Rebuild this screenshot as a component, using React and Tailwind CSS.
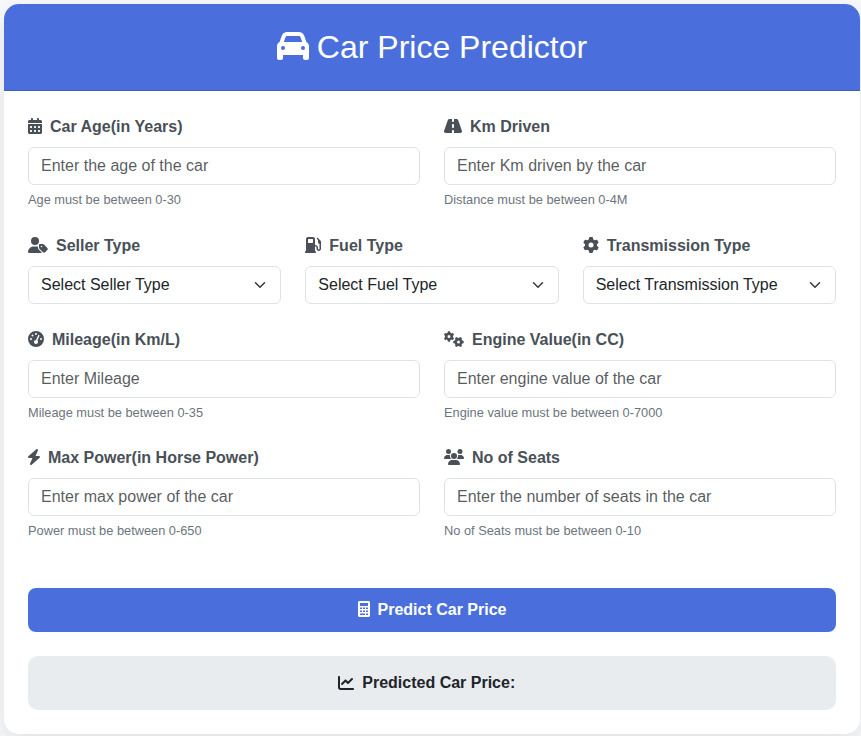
import React from "react";
import {
  FaCar,
  FaCalendarDays,
  FaRoad,
  FaUserTag,
  FaGasPump,
  FaGear,
  FaGaugeHigh,
  FaGears,
  FaUsers,
  FaChartLine,
} from "react-icons/fa6";

function Bolt({ className }) {
  return (
    <svg viewBox="0 0 384 512" fill="currentColor" className={className}>
      <path d="M240.5 224H352C365.3 224 377.3 232.3 381.1 244.7C386.6 257.2 383.1 271.3 373.1 280.1L117.1 504.1C105.8 513.9 89.27 514.7 77.19 505.9C65.1 497.1 60.7 481.1 66.59 467.4L143.5 288H31.1C18.67 288 6.733 279.7 2.044 267.3C-2.645 254.8 .8944 240.7 10.93 231.9L266.9 7.918C278.2-1.92 294.7-2.669 306.8 6.114C318.9 14.9 323.3 30.87 317.4 44.61L240.5 224z" />
    </svg>
  );
}

function Calculator({ className }) {
  return (
    <svg viewBox="0 0 384 512" fill="currentColor" fillRule="evenodd" className={className}>
      <path d="M336 0H48C22.4 0 0 22.4 0 48v416c0 25.600 22.400 48 48 48h288c25.600 0 48-22.400 48-48V48c0-25.600-22.400-48-48-48zM64 64h256v96H64zM64 208h64v48H64zM160 208h64v48h-64zM256 208h64v48h-64zM64 304h64v48H64zM160 304h64v48h-64zM256 304h64v48h-64zM64 400h160v48H64zM256 400h64v48h-64z" />
    </svg>
  );
}

function Label({ icon: Icon, iconClass, children }) {
  return (
    <label className="mb-2 flex h-6 items-center gap-2 font-bold text-[#495057]">
      <Icon className={"mb-0.5 h-4 shrink-0 " + iconClass} />
      <span>{children}</span>
    </label>
  );
}

function Field({ icon, iconClass, label, placeholder, help }) {
  return (
    <div>
      <Label icon={icon} iconClass={iconClass}>{label}</Label>
      <input
        placeholder={placeholder}
        className="block h-[38px] w-full rounded-md border border-[#dee2e6] bg-white px-3 py-1.5 leading-6 placeholder:text-[#212529bf]"
      />
      <div className="mt-1 h-5 text-[12.8px] leading-[22px] text-[#6c757d]">{help}</div>
    </div>
  );
}

function Select({ icon, iconClass, label, value }) {
  return (
    <div>
      <Label icon={icon} iconClass={iconClass}>{label}</Label>
      <div className="flex h-[38px] items-center justify-between rounded-md border border-[#dee2e6] bg-white px-3 leading-6">
        <span>{value}</span>
        <svg viewBox="0 0 16 16" className="h-3 w-4" fill="none" stroke="#343a40" strokeWidth="2" strokeLinecap="round" strokeLinejoin="round">
          <path d="m2 5 6 6 6-6" />
        </svg>
      </div>
    </div>
  );
}

export default function App() {
  return (
    <div className="h-[736px] overflow-hidden bg-[#f8f9fa] pl-1 pr-px pt-1 font-['Liberation_Sans',Arial,sans-serif] text-base text-[#212529]">
      <div className="h-[730px] overflow-hidden rounded-[15px] bg-white shadow-[0_10px_30px_rgba(0,0,0,0.1)]">
        <header className="flex h-[87px] items-center justify-center gap-2 border-b border-[#3f5fbf] bg-[#4a6fdc] text-white">
          <FaCar className="mb-0.5 size-8" />
          <h2 className="text-[32px] leading-[38.4px]">Car Price Predictor</h2>
        </header>
        <form className="flex flex-col gap-6 p-6">
          <div className="mb-px grid grid-cols-2 gap-6">
            <Field icon={FaCalendarDays} iconClass="w-3.5" label="Car Age(in Years)" placeholder="Enter the age of the car" help="Age must be between 0-30" />
            <Field icon={FaRoad} iconClass="w-[18px]" label="Km Driven" placeholder="Enter Km driven by the car" help="Distance must be between 0-4M" />
          </div>
          <div className="grid grid-cols-3 gap-6">
            <Select icon={FaUserTag} iconClass="w-5" label="Seller Type" value="Select Seller Type" />
            <Select icon={FaGasPump} iconClass="w-4" label="Fuel Type" value="Select Fuel Type" />
            <Select icon={FaGear} iconClass="w-4" label="Transmission Type" value="Select Transmission Type" />
          </div>
          <div className="grid grid-cols-2 gap-6">
            <Field icon={FaGaugeHigh} iconClass="w-4" label="Mileage(in Km/L)" placeholder="Enter Mileage" help="Mileage must be between 0-35" />
            <Field icon={FaGears} iconClass="w-5" label="Engine Value(in CC)" placeholder="Enter engine value of the car" help="Engine value must be between 0-7000" />
          </div>
          <div className="grid grid-cols-2 gap-6">
            <Field icon={Bolt} iconClass="w-3" label="Max Power(in Horse Power)" placeholder="Enter max power of the car" help="Power must be between 0-650" />
            <Field icon={FaUsers} iconClass="w-5" label="No of Seats" placeholder="Enter the number of seats in the car" help="No of Seats must be between 0-10" />
          </div>
          <button type="button" className="mt-6 flex h-11 items-center justify-center gap-2 rounded-lg bg-[#4a6fdc] font-bold text-white">
            <Calculator className="mb-0.5 h-4 w-3" />
            <span>Predict Car Price</span>
          </button>
          <div className="flex h-[54px] items-center justify-center gap-2 rounded-[10px] bg-[#e9ecef] pr-[10.5px] font-bold">
            <FaChartLine className="size-4" />
            <span>Predicted Car Price:</span>
          </div>
        </form>
      </div>
    </div>
  );
}
